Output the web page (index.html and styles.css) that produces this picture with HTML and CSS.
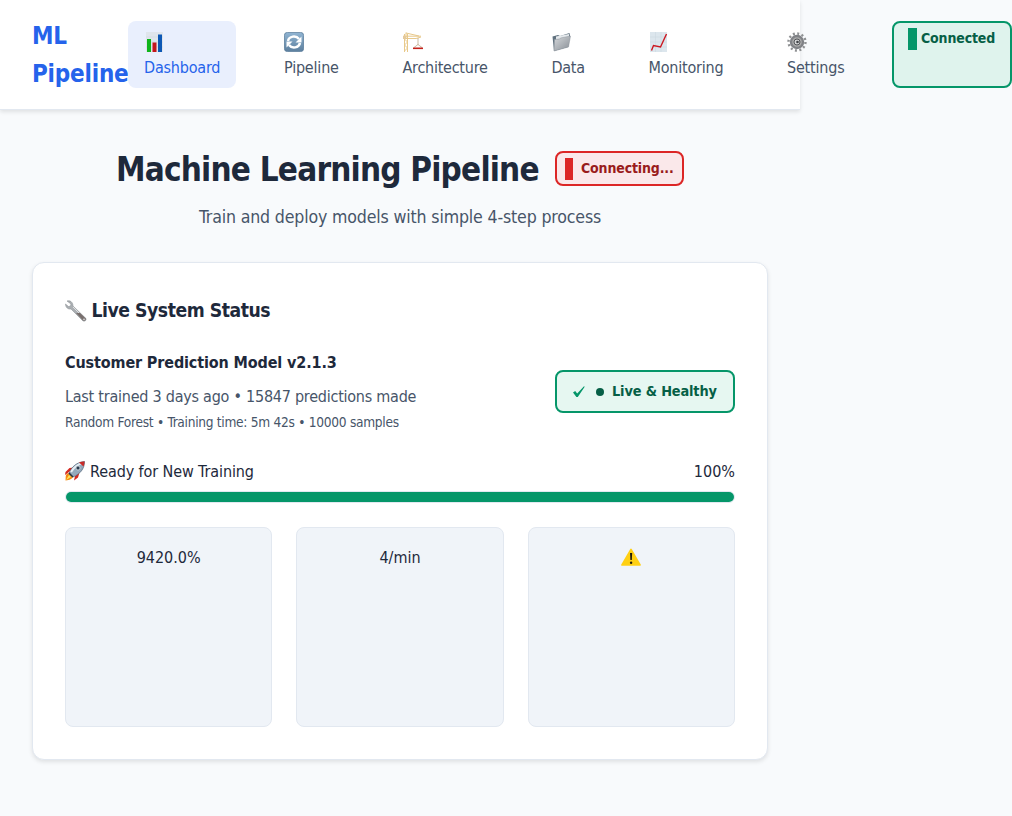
FILE: index.html
```html
<!DOCTYPE html>
<html lang="en">
<head>
<meta charset="utf-8">
<title>ML Pipeline</title>
<link rel="stylesheet" href="styles.css">
</head>
<body>
<nav class="nav">
  <div class="brand">ML Pipeline</div>
  <ul class="menu">
    <li class="item item-dashboard active">
      <svg class="icon" viewBox="0 0 20 20"><rect x="1" width="17" height="20" fill="#dfe5ec"/><path d="M1 5h17M1 10h17M1 15h17" stroke="#cbd4df" stroke-width=".5"/><rect x="2" y="7" width="4" height="13" fill="#0fb51c"/><rect x="7.500" y="10.500" width="4" height="9.500" fill="#c3161c"/><rect x="13" y="2.500" width="4" height="17.500" fill="#0d58b5"/></svg>
      <span>Dashboard</span>
    </li>
    <li class="item item-pipeline">
      <svg class="icon" viewBox="0 0 20 20"><defs><linearGradient id="blue" x2="0" y2="1"><stop stop-color="#91b5d3"/><stop offset="1" stop-color="#5c7f9e"/></linearGradient></defs><rect x=".4" y=".4" width="19.200" height="19.200" rx="3" fill="url(#blue)" stroke="#587b99" stroke-width=".8"/><path d="M4 9c1-5 8-6 11-2M16 11c-1 5-8 6-11 2" fill="none" stroke="#fff" stroke-width="2.500"/><path d="M17.500 4.500v6h-6zM2.500 15.500v-6h6z" fill="#fff"/></svg>
      <span>Pipeline</span>
    </li>
    <li class="item item-architecture">
      <svg class="icon" viewBox="0 0 20 20"><path d="M1.500 20V2M4.500 20V2M1.500 19l3-3-3-3 3-3-3-3 3-3M0 4.200h18M0 6.500h13L18 5M3 .5v4M3 1l13 3" fill="none" stroke="#e8c98b" stroke-width="1"/><path d="M0 4h3v3H0z" fill="#e3c99d"/><path d="M15 6v7M11 15.500l4-3 4 3" fill="none" stroke="#bda98b" stroke-width=".8"/><rect x="10" y="15.500" width="10" height="1.600" fill="#c3221b"/></svg>
      <span>Architecture</span>
    </li>
    <li class="item item-data">
      <svg class="icon" viewBox="0 0 20 20"><defs><linearGradient id="folder" x2="1" y2="1"><stop stop-color="#d6d9dc"/><stop offset="1" stop-color="#878d94"/></linearGradient></defs><path d="M.5 4.500L6 3l2 1 9.500-3 .5 3-2 11L2 19z" fill="#60717e"/><path d="M4 4.500l13-2.500v3L4 8z" fill="#e5e9ec"/><path d="M2.500 7.500l5-.5 1-1 10-2L16.500 15 2 19z" fill="url(#folder)" stroke="#8d959c" stroke-width=".5"/></svg>
      <span>Data</span>
    </li>
    <li class="item item-monitoring">
      <svg class="icon" viewBox="0 0 20 20"><rect x="1" width="17" height="20" fill="#dce6ed"/><path d="M1 5h17M1 10h17M1 15h17M6.500 0v20M12 0v20" stroke="#cad6df" stroke-width=".5"/><path d="M2.500 18.500l2-5 7 1.500 6-13" fill="none" stroke="#cc1720" stroke-width="1.400"/></svg>
      <span>Monitoring</span>
    </li>
    <li class="item item-settings">
      <svg class="icon" viewBox="0 0 20 20"><circle cx="10" cy="10" r="8.500" fill="none" stroke="#8f9193" stroke-width="2.400" stroke-dasharray="2 2.450"/><circle cx="10" cy="10" r="6" fill="#aaa" stroke="#808286" stroke-width="2.400"/><circle cx="10" cy="10" r="3" fill="#d3d4d5" stroke="#55575a"/><circle cx="10.500" cy="10" r="1.300" fill="#414347"/></svg>
      <span>Settings</span>
    </li>
    <li class="connection connected"><i class="bar"></i><span>Connected</span></li>
  </ul>
</nav>
<main class="main">
  <header class="heading">
    <h1 class="title">Machine Learning Pipeline</h1>
    <div class="connection connecting"><i class="bar"></i><span>Connecting...</span></div>
  </header>
  <p class="subtitle"><span>Train and deploy models with simple 4-step process</span></p>
  <section class="card">
    <h2 class="card-title">
      <svg class="wrench" viewBox="0 0 22 22"><path d="M2 1c3-1 6 1 6 5l13 12.500c.5 2-1 3-3 2.500L6 9C3 9.500.5 7.500.5 4l3 2.500 2-.5.500-2z" fill="#aaaeb2" stroke="#858a8f" stroke-width=".5"/><path d="M8 7l12 12" stroke="#e0e1e2"/><path d="M11 13l7 7.500c2 .5 3-.5 2.800-2L15 13" fill="#786f6d"/><circle cx="19" cy="19.300" r=".8" fill="#eee"/></svg>
      <span>Live System Status</span>
    </h2>
    <div class="model">
      <div>
        <h3 class="model-name">Customer Prediction Model v2.1.3</h3>
        <p class="trained">Last trained 3 days ago • 15847 predictions made</p>
        <p class="details">Random Forest • Training time: 5m 42s • 10000 samples</p>
      </div>
      <div class="health">
        <svg class="check" viewBox="0 0 12 12"><path d="M0 6.500L2.200 5l2 2.500L11 .300l.7.500L4.800 11H3.400z" fill="#059669"/></svg>
        <i class="dot"></i><span>Live &amp; Healthy</span>
      </div>
    </div>
    <div class="training">
      <svg class="icon" viewBox="0 0 20 20"><path d="M4 11l-4 3 .5-3 4-4 4-.5zM10 15l-1 4.500 4-3 1.500-5z" fill="#d52920"/><path d="M3 12c-3 2-2 4-2.500 7.500C5 19 7 18 8 16z" fill="#f58b13"/><path d="M4 14l-3 5 5-3z" fill="#ffe75a"/><path d="M4 13C6 6 12 1 19.500.5 19.500 8 15 13 8 16z" fill="#94a9bc" stroke="#53667a" stroke-width=".7"/><path d="M6 11c3-5 7-8 12-9" fill="none" stroke="#e4edf3" stroke-width="2"/><path d="M14 1.600c2-.8 4-1 5.500-1 0 2-.5 3.600-1 5z" fill="#c92b29"/><circle cx="13" cy="7" r="2" fill="#26384c" stroke="#e3e8ed" stroke-width=".7"/><path d="M4 12l4 4" stroke="#293643" stroke-width="1.500"/></svg>
      <span class="ready">Ready for New Training</span>
      <span class="percent">100%</span>
    </div>
    <div class="progress"><div class="progress-fill"></div></div>
    <div class="metrics">
      <div class="metric"><span>9420.0%</span></div>
      <div class="metric"><span>4/min</span></div>
      <div class="metric"><svg class="icon" viewBox="0 0 20 20"><path d="M10 2.500L19 18H1z" fill="#ffd014" stroke="#ffd014" stroke-width="1.700" stroke-linejoin="round"/><path d="M9 6h2.200l-.4 7H9.400z" fill="#211c0c"/><circle cx="10.100" cy="15.800" r="1.200" fill="#211c0c"/></svg></div>
    </div>
  </section>
</main>
</body>
</html>
```
FILE: styles.css
```css
* { box-sizing: border-box; }
html { background: #f8fafc; }
body {
  width: 1012px;
  min-height: 816px;
  margin: 0;
  font: 16px/25.6px "DejaVu Sans Condensed", "DejaVu Sans", sans-serif;
  font-stretch: condensed;
  color: #1e293b;
  letter-spacing: -.2px;
}
h1, h2, h3, p, ul { margin: 0; padding: 0; }
svg { display: block; flex: none; }
span { white-space: nowrap; }
.nav {
  display: flex;
  align-items: center;
  width: 800px;
  height: 110px;
  padding: 0 32px;
  background: #fff;
  border-bottom: 1px solid #e2e8f0;
  box-shadow: 0 2px 4px rgba(0, 0, 0, .1);
}
.brand { flex: none; width: 96px; padding-top: 1px; font-size: 24px; font-weight: 700; line-height: 38px; color: #2563eb; }
.menu { display: flex; flex: none; gap: 32px; list-style: none; }
.item { flex: none; height: 67px; padding: 8px 16px; border-radius: 8px; color: #475569; }
.item span { display: block; }
.icon { width: 20px; height: 20px; }
.item .icon { margin: 3px 0 2.600px; }
.active { background: #e9effd; color: #2563eb; }
.item-dashboard { width: 108px; }
.item-dashboard .icon { margin-left: 1px; }
.item-pipeline { width: 86.500px; }
.item-architecture { width: 117px; letter-spacing: -.25px; }
.item-data { width: 65px; letter-spacing: -.3px; }
.item-monitoring { width: 106.500px; }
.item-settings { width: 89px; }
.connection { display: flex; flex: none; border: 2px solid; border-radius: 8px; font-size: 14px; font-weight: 700; line-height: 22px; letter-spacing: -.15px; }
.bar { flex: none; width: 9px; height: 22px; }
.connected { width: 120px; padding: 5px 14px; gap: 4px; color: #065f46; border-color: #059669; background: #dff3ed; }
.connected span { line-height: 20px; }
.connected .bar { background: #059669; }
.connecting { width: 129px; height: 35px; margin-bottom: 2px; padding: 5px 8px; gap: 8px; color: #991b1b; border-color: #dc2626; background: #fae8ea; }
.connecting span { line-height: 20px; }
.connecting .bar { width: 8px; background: #dc2626; }
.main { width: 800px; padding: 32px; }
.heading { display: flex; justify-content: center; align-items: center; gap: 16px; height: 54px; }
.title { width: 423px; padding-top: 1px; font-size: 33px; line-height: 56px; white-space: nowrap; letter-spacing: -.8px; }
.subtitle { margin-top: 7px; font-size: 17.600px; line-height: 28px; text-align: center; color: #475569; letter-spacing: -.16px; }
.card { height: 498px; margin-top: 31px; padding: 32px; border: 1px solid #e2e8f0; border-radius: 12px; background: #fff; box-shadow: 0 2px 4px rgba(0, 0, 0, .1); }
.card-title { display: flex; align-items: center; gap: 4.500px; height: 31px; font-size: 19.200px; line-height: 31px; letter-spacing: -.46px; }
.wrench { width: 22px; height: 22px; }
.model { display: flex; align-items: center; justify-content: space-between; margin-top: 23px; height: 86px; }
.model-name { font-size: 16px; line-height: 26px; letter-spacing: -.13px; }
.trained { margin-top: 8px; line-height: 26px; color: #475569; letter-spacing: -.24px; }
.details { margin-top: 1px; font-size: 13.600px; line-height: 23px; color: #475569; letter-spacing: -.28px; }
.health { display: flex; align-items: center; width: 180px; height: 43px; margin-bottom: 1px; padding: 0 16px; border: 2px solid #059669; border-radius: 8px; background: #e6f7f1; color: #065f46; font-size: 14.400px; font-weight: 700; letter-spacing: -.15px; }
.check { width: 12px; height: 12px; }
.dot { width: 8px; height: 8px; margin: 0 8px 0 11px; border-radius: 50%; background: #065f46; }
.training { display: flex; align-items: center; height: 26px; margin-top: 23px; }
.training span { padding-top: 1px; }
.ready { margin-left: 5px; letter-spacing: -.1px; }
.percent { margin-left: auto; letter-spacing: 0; }
.progress { height: 12px; margin-top: 7px; border: 1px solid #e2e8f0; border-radius: 6px; background: #f1f5f9; }
.progress-fill { height: 10px; border-radius: 5px; background: #059669; }
.metrics { display: grid; grid-template-columns: repeat(3, 1fr); gap: 24px; margin-top: 24px; }
.metric { display: flex; justify-content: center; height: 200px; padding-top: 17px; border: 1px solid #e2e8f0; border-radius: 8px; background: #f0f4f9; letter-spacing: 0; }
.metric .icon { margin-top: 2px; }
```
